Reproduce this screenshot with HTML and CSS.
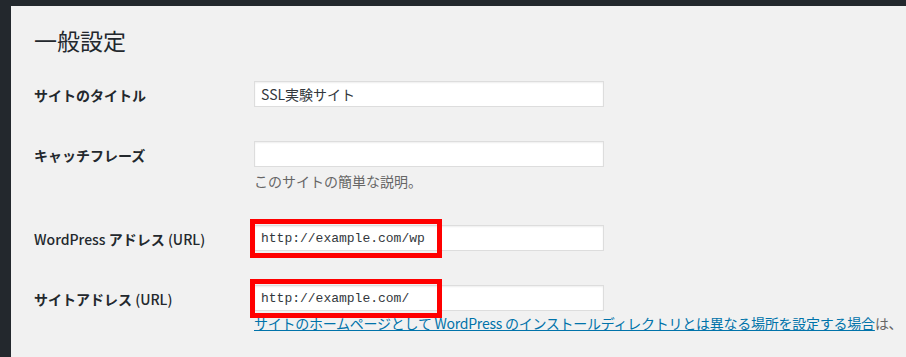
FILE: index.html
```html
<!DOCTYPE html>
<html lang="ja">
<head>
    <meta charset="UTF-8">
    <meta name="viewport" content="width=device-width, initial-scale=1.0">
    <title>一般設定</title>
    <link rel="stylesheet" href="styles.css">
</head>
<body>

    <div class="wrap">
        <h1>一般設定</h1>

        <table class="form-table">
            <colgroup>
                <col class="col-label">
                <col class="col-field">
            </colgroup>
            <tr>
                <th>サイトのタイトル</th>
                <td><input type="text" class="regular-text" value="SSL実験サイト"></td>
            </tr>
            <tr>
                <th>キャッチフレーズ</th>
                <td>
                    <input type="text" class="regular-text" value="">
                    <p class="description">このサイトの簡単な説明。</p>
                </td>
            </tr>
            <tr>
                <th><span class="latin">WordPress</span> アドレス <span class="latin">(URL)</span></th>
                <td>
                    <span class="marked">
                        <input type="text" class="regular-text code" value="http://example.com/wp">
                        <span class="mark"></span>
                    </span>
                </td>
            </tr>
            <tr>
                <th>サイトアドレス <span class="latin">(URL)</span></th>
                <td>
                    <span class="marked">
                        <input type="text" class="regular-text code" value="http://example.com/">
                        <span class="mark"></span>
                    </span>
                    <p class="description nowrap"><a href="#">サイトのホームページとして WordPress のインストールディレクトリとは異なる場所を設定する場合</a>は、</p>
                </td>
            </tr>
        </table>
    </div>

</body>
</html>
```

FILE: styles.css
```css
html, body { margin: 0; height: 100%; }
body { background: #23282d; font-family: "Noto Sans CJK JP", "Noto Sans", sans-serif; font-size: 14px; color: #23282d; overflow: hidden; }

.wrap { margin: 6px 0 0 11px; padding: 0 0 0 23px; background: #f1f1f1; height: 100%; overflow: hidden; }

h1 { margin: 0; padding: 20px 0 0; font-size: 23px; font-weight: 400; line-height: 29px; }

.form-table { border-collapse: collapse; margin-top: 11px; table-layout: fixed; width: 580px; }
.col-label { width: 210px; }
.form-table th { padding: 20px 10px 0 0; text-align: left; vertical-align: top; font-weight: 700; line-height: 18px; white-space: nowrap; }
.form-table th .latin { font-weight: 500; }
.form-table td { padding: 15px 10px 19px; vertical-align: top; line-height: 20px; }

.regular-text { display: block; box-sizing: border-box; width: 350px; height: 26px; margin: 0; padding: 2px 6px; border: 1px solid #ddd; background: #fff; box-shadow: inset 0 1px 2px rgba(0,0,0,.07); font-family: "Noto Sans CJK JP", sans-serif; font-size: 14px; color: #32373c; }
.code { font-family: "Liberation Mono", monospace; font-size: 13px; color: #32373c; }

.description { margin: 4px 0 0; color: #666; }
.nowrap { white-space: nowrap; margin-top: 2px; letter-spacing: -0.25px; }
.description a { color: #0073aa; text-decoration: underline; }

.marked { position: relative; display: block; width: 350px; }
.mark { position: absolute; left: -4px; top: -6px; width: 192px; height: 39px; box-sizing: border-box; border: 5px solid #f00; }
```
